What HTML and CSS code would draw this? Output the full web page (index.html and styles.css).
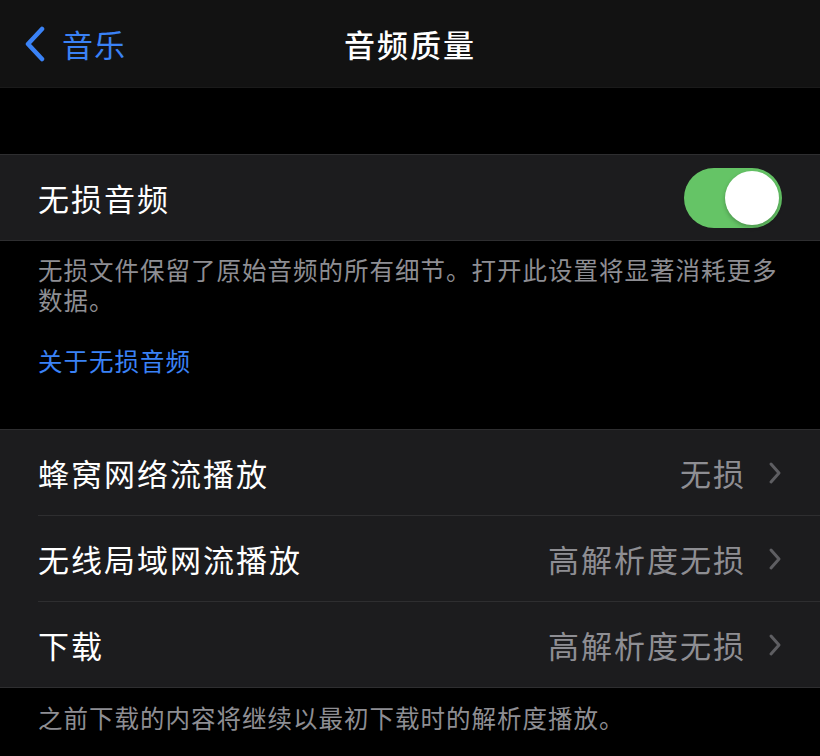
FILE: index.html
```html
<!DOCTYPE html>
<html lang="zh-CN">
<head>
  <meta charset="UTF-8" />
  <meta name="viewport" content="width=device-width, initial-scale=1.0" />
  <title>音频质量</title>
  <link rel="stylesheet" href="styles.css">
</head>
<body>
  <header class="navbar">
    <a class="back" href="#">
      <svg class="back-icon" width="22" height="36" viewBox="0 0 22 36">
        <path d="M18 3 L4 18 L18 33" fill="none" stroke="currentColor" stroke-width="4.5" stroke-linecap="round" stroke-linejoin="round"/>
      </svg>
      <span>音乐</span>
    </a>
    <h1 class="title">音频质量</h1>
    <div></div>
  </header>

  <section class="group first">
    <div class="row">
      <span class="label">无损音频</span>
      <div class="switch on"><div class="knob"></div></div>
    </div>
  </section>

  <div class="note">
    <p>无损文件保留了原始音频的所有细节。打开此设置将显著消耗更多数据。</p>
    <a class="link" href="#">关于无损音频</a>
  </div>

  <section class="group">
    <div class="row">
      <span class="label">蜂窝网络流播放</span>
      <span class="value">无损</span>
      <svg class="chevron" width="14" height="24" viewBox="0 0 14 24"><path d="M3 3 L11 12 L3 21" fill="none" stroke="currentColor" stroke-width="3" stroke-linecap="round" stroke-linejoin="round"/></svg>
    </div>
    <div class="row">
      <span class="label">无线局域网流播放</span>
      <span class="value">高解析度无损</span>
      <svg class="chevron" width="14" height="24" viewBox="0 0 14 24"><path d="M3 3 L11 12 L3 21" fill="none" stroke="currentColor" stroke-width="3" stroke-linecap="round" stroke-linejoin="round"/></svg>
    </div>
    <div class="row">
      <span class="label">下载</span>
      <span class="value">高解析度无损</span>
      <svg class="chevron" width="14" height="24" viewBox="0 0 14 24"><path d="M3 3 L11 12 L3 21" fill="none" stroke="currentColor" stroke-width="3" stroke-linecap="round" stroke-linejoin="round"/></svg>
    </div>
  </section>

  <div class="note small">
    <p>之前下载的内容将继续以最初下载时的解析度播放。</p>
  </div>
</body>
</html>
```

FILE: styles.css
```css
:root {
  --bg: #000;
  --nav: #121212;
  --cell: #1c1c1e;
  --line: #2e2e30;
  --text: #fff;
  --muted: #8e8e93;
  --blue: #3a82f6;
  --green: #65c466;
}

body {
  margin: 0;
  background: var(--bg);
  color: var(--text);
  font-family: "Noto Sans CJK SC", "Noto Sans", sans-serif;
}

.navbar {
  height: 88px;
  background: var(--nav);
  display: grid;
  grid-template-columns: 1fr auto 1fr;
  align-items: center;
  border-bottom: 1px solid #1a1a1a;
  box-sizing: border-box;
}

.back {
  display: flex;
  align-items: center;
  gap: 16px;
  padding-left: 24px;
  color: var(--blue);
  text-decoration: none;
  font-size: 31px;
  letter-spacing: 1px;
}

.title {
  margin: 0;
  font-size: 31px;
  font-weight: 500;
  letter-spacing: 2px;
}

.group {
  background: var(--cell);
  border-top: 1px solid var(--line);
  border-bottom: 1px solid var(--line);
  margin-top: 66px;
}

.row {
  height: 85px;
  display: flex;
  align-items: center;
  padding: 0 38px;
  font-size: 31px;
  letter-spacing: 2px;
}

.row + .row {
  border-top: 1px solid var(--line);
  margin-left: 38px;
  padding-left: 0;
}

.label {
  flex: 1;
}

.value {
  color: var(--muted);
  margin-right: 22px;
}

.chevron {
  color: #5e5e62;
}

.switch {
  width: 98px;
  height: 60px;
  border-radius: 30px;
  background: #39393d;
  display: flex;
  align-items: center;
  padding: 3px;
  box-sizing: border-box;
}

.switch.on {
  background: var(--green);
  justify-content: flex-end;
}

.knob {
  width: 54px;
  height: 54px;
  border-radius: 50%;
  background: #fff;
  box-shadow: 0 2px 4px rgba(0, 0, 0, 0.25);
}

.note {
  padding: 14px 40px 0 38px;
  font-size: 24.5px;
  line-height: 30px;
  letter-spacing: 1px;
  color: var(--muted);
}

.note p {
  margin: 0;
}

.link {
  display: block;
  margin-top: 31px;
  color: var(--blue);
  text-decoration: none;
}

.note + .group {
  margin-top: 53px;
}

.note.small {
  padding-top: 15px;
}
```
